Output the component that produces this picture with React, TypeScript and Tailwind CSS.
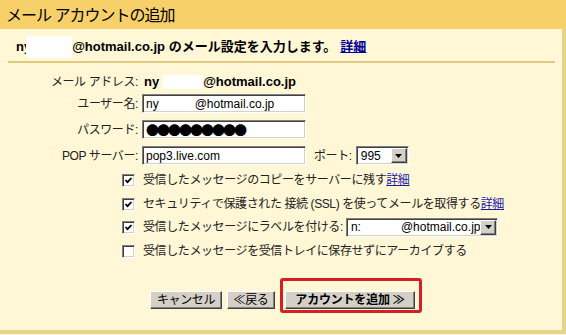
import React from "react";

function DropBtn() {
  return (
    <div className="w-[16px] h-full bg-[#D4D0C8] border border-t-white border-l-white border-b-[#404040] border-r-[#404040] shadow-[inset_-1px_-1px_0_#808080] flex items-center justify-center">
      <svg width="7" height="4" viewBox="0 0 7 4">
        <polygon points="0,0 7,0 3.5,4" fill="#000" />
      </svg>
    </div>
  );
}

function Check({ checked }: { checked: boolean }) {
  return (
    <div className="w-[13px] h-[13px] bg-white border border-t-[#808080] border-l-[#808080] border-b-white border-r-white shadow-[inset_1px_1px_0_#404040,inset_-1px_-1px_0_#D4D0C8] flex items-center justify-center">
      {checked && (
        <svg width="9" height="9" viewBox="0 0 9 9">
          <polyline points="1.5,4 3.5,6.2 7.5,2" fill="none" stroke="#000" strokeWidth="1.8" />
        </svg>
      )}
    </div>
  );
}

export default function App() {
  return (
    <div className="w-[566px] h-[335px] bg-[#FFF7D6] flex flex-col overflow-hidden font-['Liberation_Sans','Noto_Sans_CJK_JP',sans-serif] text-[#1a1a1a]">
      <div className="h-[29px] shrink-0 bg-[#F8D06A] flex items-center pl-[6px] pt-[3px]">
        <span className="text-[16px] leading-none tracking-[-1px] text-black">メール アカウントの追加</span>
      </div>
      <div className="h-[305px] shrink-0 border-r-[4px] border-b-[4px] border-[#E8D38C] flex flex-col">
        <div className="h-[32px] shrink-0 flex items-center pl-[16px] pt-[3px] text-[13px] font-bold leading-none text-black">
          <span>ny</span>
          <span className="inline-block w-[46px] h-[22px] bg-white -ml-[5px]" />
          <span>@hotmail.co.jp のメール設定を入力します。</span>
          <a className="ml-[4px] text-[#000099] underline">詳細</a>
        </div>
        <div className="ml-[8px] w-[547px] h-[2px] bg-[#E3CA7F] shrink-0" />

        <div className="mt-[10px] h-[18px] flex items-center">
          <div className="w-[142px] pr-[4px] text-right text-[12px] tracking-[-0.4px] text-[#222]">メール アドレス:</div>
          <div className="ml-[2px] flex items-center text-[13px] font-bold text-black">
            <span>ny</span>
            <span className="inline-block w-[40px] h-[14px] bg-white ml-[4px]" />
            <span>@hotmail.co.jp</span>
          </div>
        </div>

        <div className="mt-[3px] h-[19px] flex items-center">
          <div className="w-[142px] pr-[4px] text-right text-[12px] tracking-[-0.4px] text-[#222]">ユーザー名:</div>
          <div className="w-[164px] h-[19px] bg-white border border-t-[#808080] border-l-[#808080] border-b-white border-r-white shadow-[inset_1px_1px_0_#404040,inset_-1px_-1px_0_#D4D0C8] flex items-center pl-[3px] text-[12px] text-black">
            <span>ny</span>
            <span className="inline-block w-[36px]" />
            <span>@hotmail.co.jp</span>
          </div>
        </div>

        <div className="mt-[7px] h-[19px] flex items-center">
          <div className="w-[142px] pr-[4px] text-right text-[12px] tracking-[-0.4px] text-[#222]">パスワード:</div>
          <div className="w-[164px] h-[19px] bg-white border border-t-[#808080] border-l-[#808080] border-b-white border-r-white shadow-[inset_1px_1px_0_#404040,inset_-1px_-1px_0_#D4D0C8] flex items-center pl-[3px] text-[13px] tracking-[-2px] leading-none text-black font-['Noto_Sans_CJK_JP',sans-serif]">
            ●●●●●●●●●
          </div>
        </div>

        <div className="mt-[7px] h-[19px] flex items-center">
          <div className="w-[142px] pr-[4px] text-right text-[12px] tracking-[-0.4px] text-[#222]">POP サーバー:</div>
          <div className="w-[164px] h-[19px] bg-white border border-t-[#808080] border-l-[#808080] border-b-white border-r-white shadow-[inset_1px_1px_0_#404040,inset_-1px_-1px_0_#D4D0C8] flex items-center pl-[3px] text-[12px] text-black">
            pop3.live.com
          </div>
          <div className="ml-[8px] text-[12px] tracking-[-0.4px] text-[#222]">ポート:</div>
          <div className="ml-[4px] w-[53px] h-[19px] bg-white border border-t-[#808080] border-l-[#808080] border-b-white border-r-white shadow-[inset_1px_1px_0_#404040,inset_-1px_-1px_0_#D4D0C8] flex items-center justify-between p-[1px] text-[12px] text-black">
            <span className="pl-[3px]">995</span>
            <DropBtn />
          </div>
        </div>

        <div className="mt-[5px] h-[20px] flex items-center pl-[122px] gap-[8px] text-[12px] tracking-[-0.4px] text-[#222]">
          <Check checked />
          <span>
            受信したメッセージのコピーをサーバーに残す<a className="text-[#1A1AAA] underline">詳細</a>
          </span>
        </div>
        <div className="mt-[4px] h-[20px] flex items-center pl-[122px] gap-[8px] text-[12px] tracking-[-0.4px] text-[#222]">
          <Check checked />
          <span>
            セキュリティで保護された 接続 (SSL) を使ってメールを取得する<a className="text-[#1A1AAA] underline">詳細</a>
          </span>
        </div>
        <div className="mt-[3px] h-[20px] flex items-center pl-[122px] gap-[8px] text-[12px] tracking-[-0.4px] text-[#222]">
          <Check checked />
          <span>受信したメッセージにラベルを付ける:</span>
          <div className="-ml-[5px] w-[152px] h-[19px] bg-white border border-t-[#808080] border-l-[#808080] border-b-white border-r-white shadow-[inset_1px_1px_0_#404040,inset_-1px_-1px_0_#D4D0C8] flex items-center justify-between p-[1px] text-[12px] tracking-normal text-black">
            <span className="pl-[3px] flex">
              <span>n:</span>
              <span className="inline-block w-[40px]" />
              <span>@hotmail.co.jp</span>
            </span>
            <DropBtn />
          </div>
        </div>
        <div className="mt-[4px] h-[20px] flex items-center pl-[122px] gap-[8px] text-[12px] tracking-[-0.4px] text-[#222]">
          <Check checked={false} />
          <span>受信したメッセージを受信トレイに保存せずにアーカイブする</span>
        </div>

        <div className="mt-[30px] flex items-center pl-[150px] text-[12px] text-black">
          <button className="w-[72px] h-[18px] bg-[#D4D0C8] border border-t-white border-l-white border-b-[#404040] border-r-[#404040] shadow-[inset_-1px_-1px_0_#808080] flex items-center justify-center leading-none tracking-[-0.4px]">
            キャンセル
          </button>
          <button className="ml-[5px] w-[48px] h-[18px] bg-[#D4D0C8] border border-t-white border-l-white border-b-[#404040] border-r-[#404040] shadow-[inset_-1px_-1px_0_#808080] flex items-center justify-center leading-none tracking-[-0.4px]">
            ≪戻る
          </button>
          <div className="relative ml-[10px]">
            <button className="w-[130px] h-[18px] bg-[#D4D0C8] border border-t-white border-l-white border-b-[#404040] border-r-[#404040] shadow-[inset_-1px_-1px_0_#808080] flex items-center justify-center leading-none font-bold tracking-[-0.2px]">
              アカウントを追加 ≫
            </button>
            <div className="absolute -left-[5px] -top-[13px] -right-[7px] -bottom-[4px] border-[3px] border-[#D42020] rounded-[3px]" />
          </div>
        </div>
      </div>
    </div>
  );
}
